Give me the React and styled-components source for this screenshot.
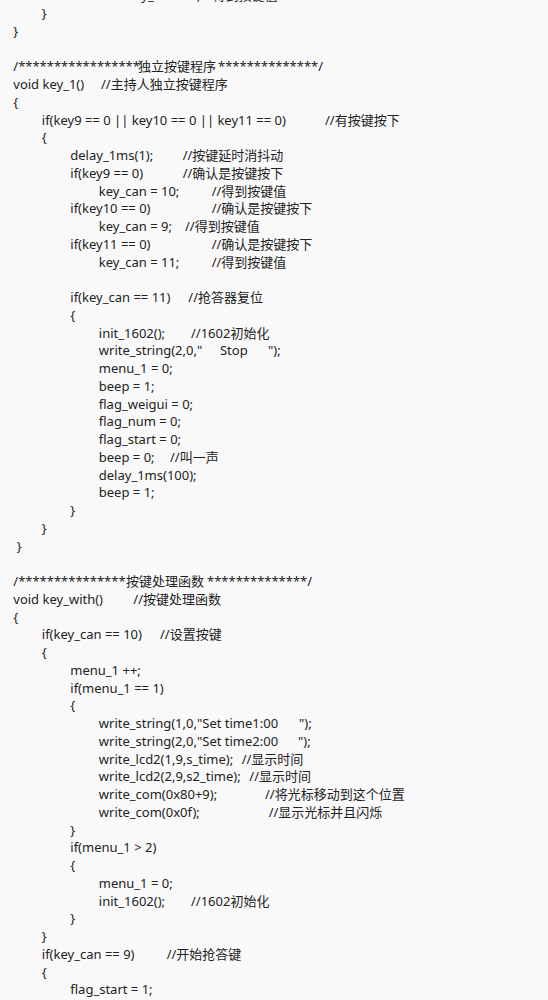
import styled, { createGlobalStyle } from "styled-components";

const GlobalStyle = createGlobalStyle`
  html, body {
    margin: 0;
    background: #f9f9f9;
  }
`;

// tab stops: left edge of each indent level
const BASE = 13.3;
const STEP = 28.5;
const ind = (lv) => BASE + STEP * lv;

// one code line: indent level, code, comment stop, comment
const L = (lv, code = "", cx, comment) =>
  cx ? [[ind(lv), code], [cx, comment]] : [[ind(lv), code]];

const stars = (n) => "*".repeat(n);

const lines = [
  L(4, "key_can = 8;", 203, "//得到按键值"),
  L(1, "}"),
  L(0, "}"),
  [],
  [[ind(0), "/" + stars(17)], [138, "独立按键程序"], [218, stars(14) + "/"]],
  L(0, "void key_1()", 101, "//主持人独立按键程序"),
  L(0, "{"),
  L(1, "if(key9 == 0 || key10 == 0 || key11 == 0)", 325, "//有按键按下"),
  L(1, "{"),
  L(2, "delay_1ms(1);", 182.7, "//按键延时消抖动"),
  L(2, "if(key9 == 0)", 182.7, "//确认是按键按下"),
  L(3, "key_can = 10;", 211.7, "//得到按键值"),
  L(2, "if(key10 == 0)", 211.7, "//确认是按键按下"),
  L(3, "key_can = 9;", 185, "//得到按键值"),
  L(2, "if(key11 == 0)", 211.7, "//确认是按键按下"),
  L(3, "key_can = 11;", 211.7, "//得到按键值"),
  [],
  L(2, "if(key_can == 11)", 188.3, "//抢答器复位"),
  L(2, "{"),
  L(3, "init_1602();", 191, "//1602初始化"),
  [[ind(3), 'write_string(2,0,"'], [220, "Stop"], [268, '");']],
  L(3, "menu_1 = 0;"),
  L(3, "beep = 1;"),
  L(3, "flag_weigui = 0;"),
  L(3, "flag_num = 0;"),
  L(3, "flag_start = 0;"),
  L(3, "beep = 0;", 170, "//叫一声"),
  L(3, "delay_1ms(100);"),
  L(3, "beep = 1;"),
  L(2, "}"),
  L(1, "}"),
  L(0, " }"),
  [],
  [[ind(0), "/" + stars(15)], [126, "按键处理函数"], [207, stars(14) + "/"]],
  L(0, "void key_with()", 133.3, "//按键处理函数"),
  L(0, "{"),
  L(1, "if(key_can == 10)", 160, "//设置按键"),
  L(1, "{"),
  L(2, "menu_1 ++;"),
  L(2, "if(menu_1 == 1)"),
  L(2, "{"),
  [[ind(3), 'write_string(1,0,"Set time1:00'], [299, '");']],
  [[ind(3), 'write_string(2,0,"Set time2:00'], [298, '");']],
  L(3, "write_lcd2(1,9,s_time);", 241.7, "//显示时间"),
  L(3, "write_lcd2(2,9,s2_time);", 249.3, "//显示时间"),
  L(3, "write_com(0x80+9);", 265, "//将光标移动到这个位置"),
  L(3, "write_com(0x0f);", 268.7, "//显示光标并且闪烁"),
  L(2, "}"),
  L(2, "if(menu_1 > 2)"),
  L(2, "{"),
  L(3, "menu_1 = 0;"),
  L(3, "init_1602();", 191, "//1602初始化"),
  L(2, "}"),
  L(1, "}"),
  L(1, "if(key_can == 9)", 166.7, "//开始抢答键"),
  L(1, "{"),
  L(2, "flag_start = 1;"),
];

const App = () => {
  return (
    <>
      <GlobalStyle />
      <Sheet>
        {lines.map((segs, i) => (
          <Line key={`line-${i}`}>
            {segs.length > 0 && <Cell $w={segs[0][0]} />}
            {segs.map(([x, text], j) => {
              const next = segs[j + 1];
              return (
                <Cell key={`seg-${j}`} $w={next ? next[0] - x : null}>
                  {text}
                </Cell>
              );
            })}
          </Line>
        ))}
      </Sheet>
    </>
  );
};

const Sheet = styled.div`
  margin-top: -12.64px;
  font-family: "Noto Sans", "Noto Sans CJK SC", sans-serif;
  font-size: 13px;
  color: #222;
`;

const Line = styled.div`
  display: flex;
  height: 17.76px;
  line-height: 17.76px;
`;

const Cell = styled.span`
  flex: none;
  white-space: pre;
  width: ${(p) => (p.$w != null ? `${p.$w}px` : "auto")};
`;

export default App;
